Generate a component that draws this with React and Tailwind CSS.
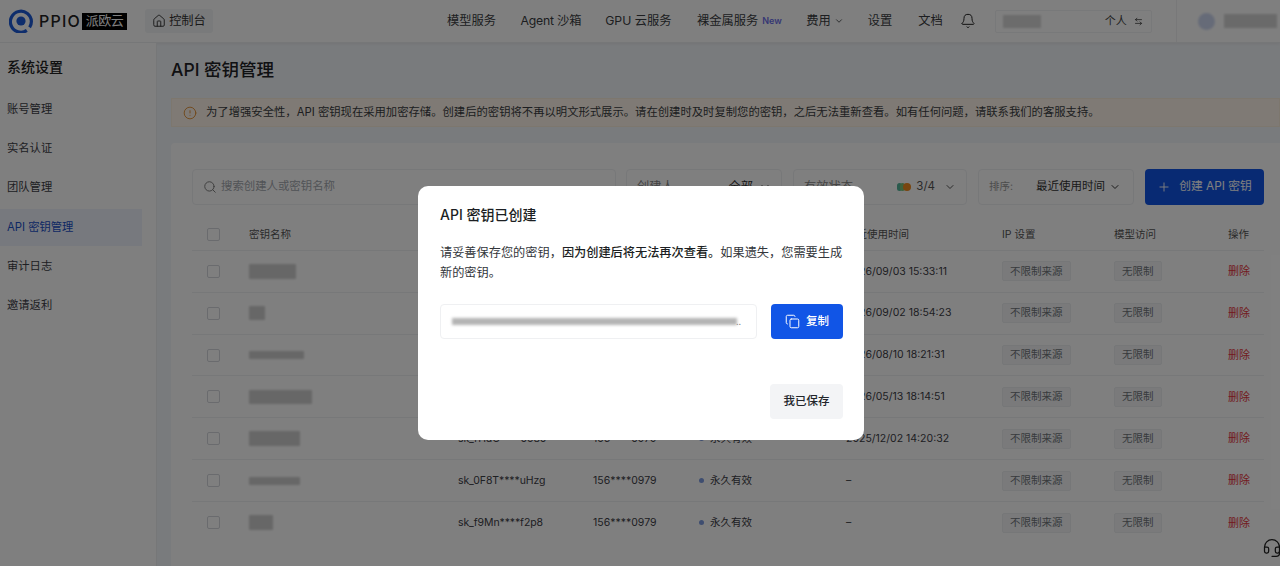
import React from "react";
import {
  ArrowLeftRight,
  Bell,
  ChevronDown,
  CircleAlert,
  Copy,
  Headset,
  House,
  Plus,
  Search,
} from "lucide-react";

const sideItems = ["账号管理", "实名认证", "团队管理", "API 密钥管理", "审计日志", "邀请返利"];

const rows = [
  { nameW: "w-[47px]", nameH: "h-[15px]", key: "sk_a7Kd****m3Qx", phone: "156****0979", used: "2026/09/03 15:33:11" },
  { nameW: "w-[16px]", nameH: "h-[14px]", key: "sk_Lp2W****e9Td", phone: "156****0979", used: "2026/09/02 18:54:23" },
  { nameW: "w-[55px]", nameH: "h-[8px]", key: "sk_Y4nB****k7Rs", phone: "156****0979", used: "2026/08/10 18:21:31" },
  { nameW: "w-[63px]", nameH: "h-[14px]", key: "sk_c8Vh****z1Pj", phone: "156****0979", used: "2026/05/13 18:14:51" },
  { nameW: "w-[51px]", nameH: "h-[15px]", key: "sk_rHdG****0580", phone: "156****0979", used: "2025/12/02 14:20:32" },
  { nameW: "w-[51px]", nameH: "h-[8px]", key: "sk_0F8T****uHzg", phone: "156****0979", used: "–" },
  { nameW: "w-[24px]", nameH: "h-[15px]", key: "sk_f9Mn****f2p8", phone: "156****0979", used: "–" },
];

const colClass = "grid grid-cols-[57px_209px_135px_106px_147px_156px_112px_114px_36px] items-center";

const Checkbox = () => (
  <span className="ml-[15px] block w-[13px] h-[13px] rounded-[2px] border border-[#d4d7dc] bg-white" />
);

const Logo = () => (
  <svg width="24" height="24" viewBox="0 0 24 24" className="shrink-0">
    <path d="M17.8 21.4A10.5 10.5 0 1 1 22.4 12.5c0 2.2-.6 4.2-1.8 5.9" fill="none" stroke="#1c5bd8" strokeWidth="3.2" />
    <circle cx="12" cy="12" r="4.6" fill="#1c5bd8" />
  </svg>
);

const FilterBox = ({ className, children }) => (
  <div className={`h-[36px] flex items-center rounded-[4px] border border-[#eef0f3] bg-white ${className}`}>
    {children}
  </div>
);

const App = () => {
  return (
    <div className="relative w-[1280px] h-[566px] overflow-hidden bg-[#f3f6fa] text-[12.25px] text-[#23262b] font-['Inter','Noto_Sans_CJK_SC',sans-serif]">
      {/* Header */}
      <header className="h-[43px] flex items-center bg-white border-b border-[#eceef1] shadow-[0_1px_3px_rgba(0,0,0,0.06)]">
        <div className="ml-[9px] flex items-center">
          <Logo />
          <span className="ml-[6px] w-[43px] text-[16px] tracking-[1.2px] font-medium text-[#222]">PPIO</span>
          <span className="w-[45px] h-[17px] flex items-center justify-center bg-black text-white text-[13px] tracking-[-0.5px]">派欧云</span>
        </div>
        <div className="ml-[18px] w-[68px] h-[24px] flex items-center justify-center gap-[3px] rounded-[3px] bg-[#f2f4f6] text-[12.25px] text-[#333]">
          <House size={14} strokeWidth={1.6} />
          控制台
        </div>
        <nav className="ml-[234px] flex items-center text-[#3a3d42]">
          <span className="mr-[24.5px]">模型服务</span>
          <span className="mr-[24px] tracking-[-0.2px]">Agent 沙箱</span>
          <span className="mr-[25.5px]">GPU 云服务</span>
          <span>裸金属服务</span>
          <span className="ml-[4px] mr-[24.5px] text-[9px] font-semibold text-[#6d70e8]">New</span>
          <span>费用</span>
          <ChevronDown size={10} className="ml-[3px] mr-[24px]" />
          <span className="mr-[26px]">设置</span>
          <span className="mr-[17px]">文档</span>
          <Bell size={16} strokeWidth={1.5} className="text-[#222]" />
        </nav>
        <div className="ml-[19px] w-[157px] h-[23px] flex items-center rounded-[2px] border border-[#f1f2f4] pl-[7px]">
          <div className="w-[38px] h-[13px] bg-[#d8d8d8] blur-[1px]" />
          <span className="ml-auto text-[11px] text-[#444]">个人</span>
          <ArrowLeftRight size={9} className="ml-[7px] mr-[8px] text-[#333]" />
        </div>
        <div className="ml-[24px] h-full flex-1 flex items-center border-l border-[#f0f1f3] pl-[21px]">
          <div className="w-[17px] h-[17px] rounded-full bg-[#ccd6f0] blur-[1px]" />
          <div className="ml-[9px] w-[53px] h-[14px] bg-[#d5d5d5] blur-[1px]" />
        </div>
      </header>

      <div className="flex h-[523px]">
        {/* Sidebar */}
        <aside className="w-[157px] shrink-0 bg-white border-r border-[#eceef1]">
          <div className="pl-[7px] pt-[14px] pb-[14px] text-[14px] leading-[20px] font-medium text-[#222]">系统设置</div>
          <ul className="flex flex-col gap-[2.2px] mr-[14px] text-[11.3px]">
            {sideItems.map((item) => (
              <li
                key={item}
                className={`h-[37px] pl-[7px] flex items-center ${
                  item === "API 密钥管理" ? "bg-[#eef3fc] text-[#1c50c8]" : "text-[#3d4046]"
                }`}
              >
                {item}
              </li>
            ))}
          </ul>
        </aside>

        {/* Main */}
        <main className="flex-1 min-w-0 pl-[14px] pt-[14px]">
          <h1 className="h-[26px] flex items-center text-[17.5px] font-medium text-[#1f2226]">API 密钥管理</h1>
          <div className="mt-[15px] h-[29px] flex items-center pl-[11px] bg-[#fff5ea] border border-[#fbeedd] text-[11.33px] text-[#3a3d42] whitespace-nowrap">
            <CircleAlert size={14} strokeWidth={1.5} className="text-[#e08a2a] shrink-0" />
            <span className="ml-[9px]">
              为了增强安全性，API 密钥现在采用加密存储。创建后的密钥将不再以明文形式展示。请在创建时及时复制您的密钥，之后无法重新查看。如有任何问题，请联系我们的客服支持。
            </span>
          </div>

          <section className="mt-[16px] h-[440px] bg-white rounded-l-[4px] pl-[21px] pr-[16px] pt-[26px]">
            {/* Filters */}
            <div className="flex items-center">
              <FilterBox className="w-[424px] pl-[10px] text-[#a3a7ae]">
                <Search size={14} strokeWidth={1.6} className="text-[#777]" />
                <span className="ml-[4px] text-[11.4px]">搜索创建人或密钥名称</span>
              </FilterBox>
              <FilterBox className="ml-[10px] w-[156px] pl-[10px] pr-[10px] justify-between text-[#888]">
                <span>创建人</span>
                <span className="flex items-center gap-[6px] text-[#333]">全部<ChevronDown size={12} /></span>
              </FilterBox>
              <FilterBox className="ml-[11px] w-[174px] pl-[10px] pr-[10px] justify-between text-[#888]">
                <span>有效状态</span>
                <span className="flex items-center text-[#555]">
                  <span className="w-[5px] h-[8px] rounded-full bg-[#55b59a]" />
                  <span className="w-[5px] h-[8px] rounded-full bg-[#7cc27a] -ml-[2px]" />
                  <span className="w-[8px] h-[8px] rounded-full bg-[#f08a1e] -ml-[2px]" />
                  <span className="ml-[5px] text-[11.5px]">3/4</span>
                  <ChevronDown size={12} className="ml-[9px]" />
                </span>
              </FilterBox>
              <FilterBox className="ml-[11px] w-[156px] pl-[10px] pr-[12px] justify-between">
                <span className="text-[#999] text-[10.5px]">排序:</span>
                <span className="flex items-center gap-[4px] text-[#333] text-[11.5px]">最近使用时间<ChevronDown size={12} /></span>
              </FilterBox>
              <button className="ml-[11px] w-[119px] h-[36px] flex items-center justify-center gap-[8px] rounded-[4px] bg-[#1155e6] text-white text-[11.8px]">
                <Plus size={14} strokeWidth={1.6} />
                创建 API 密钥
              </button>
            </div>

            {/* Table */}
            <div className="mt-[8px] text-[#3d4046]">
              <div className={`${colClass} h-[38px] pt-[6px] border-b border-[#eef0f3] text-[10.5px] text-[#555]`}>
                <Checkbox />
                <span>密钥名称</span>
                <span>API 密钥</span>
                <span>创建人</span>
                <span>有效期</span>
                <span>最近使用时间</span>
                <span>IP 设置</span>
                <span>模型访问</span>
                <span>操作</span>
              </div>
              {rows.map((row) => (
                <div key={row.key} className={`${colClass} h-[41.83px] border-b border-[#eef0f3] last:border-b-0 text-[10.5px]`}>
                  <Checkbox />
                  <div className={`${row.nameW} ${row.nameH} bg-[#cfcfcf] blur-[1px]`} />
                  <span className="tracking-[-0.1px]">{row.key}</span>
                  <span>{row.phone}</span>
                  <span className="flex items-center gap-[6px]">
                    <span className="w-[5px] h-[5px] rounded-full bg-[#7d9be0]" />
                    永久有效
                  </span>
                  <span>{row.used}</span>
                  <span className="justify-self-start h-[20px] px-[7px] flex items-center rounded-[2px] bg-[#f4f5f7] border border-[#eceef1] text-[#70747a] text-[10.5px]">不限制来源</span>
                  <span className="justify-self-start h-[20px] px-[7px] flex items-center rounded-[2px] bg-[#f4f5f7] border border-[#eceef1] text-[#70747a] text-[10.5px]">无限制</span>
                  <span className="text-[#e5353a] text-[11px]">删除</span>
                </div>
              ))}
            </div>
          </section>
        </main>
      </div>

      {/* Dialog */}
      <div className="absolute inset-0 bg-black/50 flex items-start justify-center pt-[186px] pl-[2px]">
        <div className="w-[446px] h-[254px] bg-white rounded-[10px] pl-[22px] pr-[20px] pt-[19px] text-[#22252a]">
          <h2 className="text-[14px] leading-[20px] font-medium text-[#1c1f23]">API 密钥已创建</h2>
          <p className="mt-[18px] text-[12.2px] leading-[19.5px] text-[#33363b]">
            请妥善保存您的密钥，<span className="font-medium text-[#1c1f23]">因为创建后将无法再次查看。</span>如果遗失，您需要生成新的密钥。
          </p>
          <div className="mt-[22px] flex items-center">
            <div className="w-[317px] h-[35px] flex items-center rounded-[4px] border border-[#eff0f2] pl-[11px] text-[#888]">
              <div className="w-[285px] h-[7px] bg-[#b4b4b4] blur-[1.5px]" />
              <span className="text-[9px] -ml-[1px]">..</span>
            </div>
            <button className="ml-[14px] w-[72px] h-[35px] flex items-center justify-center gap-[6px] rounded-[4px] bg-[#1155e6] text-white text-[11.5px] font-medium">
              <Copy size={15} strokeWidth={1.6} />
              复制
            </button>
          </div>
          <div className="mt-[45px] flex justify-end pr-[1px]">
            <button className="w-[73px] h-[35px] rounded-[4px] bg-[#f3f4f6] text-[11.5px] font-medium text-[#22252a]">我已保存</button>
          </div>
        </div>
      </div>

      {/* Support button */}
      <Headset size={20} strokeWidth={1.5} className="absolute left-[1262px] top-[538px] text-[#111]" />
    </div>
  );
};

export default App;
